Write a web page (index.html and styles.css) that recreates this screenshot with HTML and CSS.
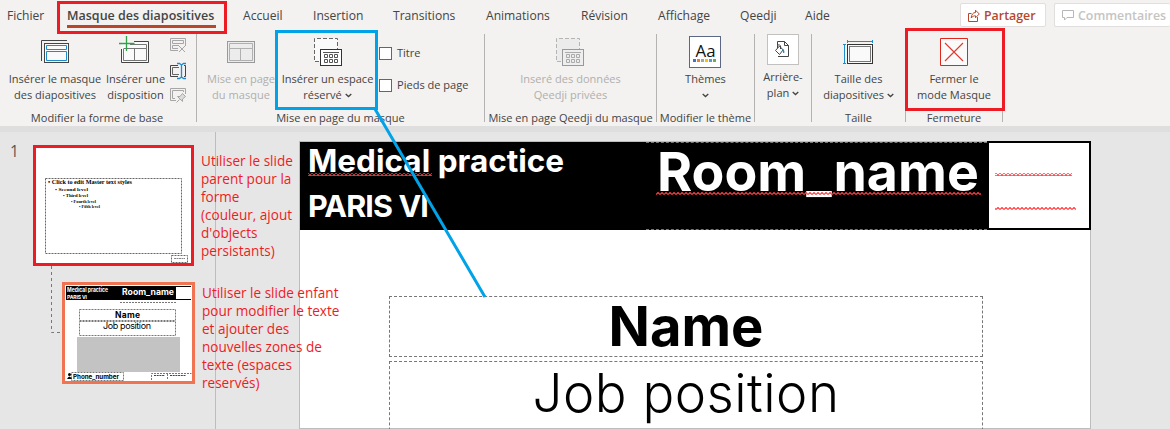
FILE: index.html
```
<!DOCTYPE html>
<html lang="fr">
<head>
<meta charset="utf-8">
<title>Masque des diapositives</title>
<link rel="stylesheet" href="styles.css">
</head>
<body>
<div class="app">
  <header class="tabbar">
    <nav class="tabs">
      <span>Fichier</span><span class="active">Masque des diapositives</span><span>Accueil</span><span>Insertion</span><span>Transitions</span><span>Animations</span><span>Révision</span><span>Affichage</span><span>Qeedji</span><span>Aide</span>
    </nav>
    <div class="actions">
      <div class="action share">
        <svg width="12" height="13" viewBox="0 0 12 13" fill="none" stroke="#b7472a"><path d="M3.500 4.500H.5v8h9V8M7.500 1.200V3.500C5 3.500 3.500 5.500 3.200 9C4.500 7.200 6 6.800 7.500 6.800V8.800L11.300 5Z"/></svg>
        <span>Partager</span>
      </div>
      <div class="action comments">
        <svg width="12" height="12" viewBox="0 0 12 12" fill="none" stroke="#b9b7b5"><path d="M.5 1.500H11.500V8.500H5L2.500 11V8.500H.5Z"/></svg>
        <span>Commentaires</span>
      </div>
    </div>
  </header>

  <section class="ribbon">
    <div class="group g-base">
      <div class="row">
        <div class="btn b-master">
          <svg width="30" height="37" viewBox="0 0 30 37" fill="none"><path d="M1.500 27V6.500H27" stroke="#444"/><rect x="4.500" y="9.500" width="24" height="19" fill="#fafafa" stroke="#444"/><path d="M6.500 11.500h20v4h-20zM6.500 17.500h20v9h-20z" stroke="#1e8bcd"/></svg>
          <span>Insérer le masque</span><span>des diapositives</span>
        </div>
        <div class="btn b-layout">
          <svg width="32" height="37" viewBox="0 0 32 37" fill="none"><rect x="3.500" y="7.500" width="27" height="21" fill="#fafafa"/><path d="M3.500 15V28.500H30.500V7.500H16" stroke="#444"/><path d="M12 10.500H28.500V14.500H12M5.500 15V26.500H28.500V14.500H5.500M16.500 14.500V26.500" stroke="#777"/><path d="M1 9.500H16.500M8.500 2V17" stroke="#33a04a" stroke-width="1.300"/></svg>
          <span>Insérer une</span><span>disposition</span>
        </div>
        <div class="tools">
          <svg width="17" height="16" viewBox="0 0 17 16" fill="none" stroke="#a6a6a6"><path d="M8 12.500H.5V.5H15.500V8M2.500 2.500h11v3h-11zM9 7.500H2.500V10.500H8"/><path d="M9 8l6 6M15 8l-6 6"/></svg>
          <svg width="17" height="18" viewBox="0 0 17 18" fill="none"><path d="M8 3.500H.5V14.500H8M14 3.500H15.500V14.500H14" stroke="#444"/><path d="M9 5.500H2.500V12.500H9" stroke="#666"/><path d="M7 1.500H9.500L11.500 3V15L9.500 16.500H7M16 1.500H13.500L11.500 3M16 16.500H13.500L11.500 15" stroke="#1e8bcd" stroke-width="1.300"/></svg>
          <svg width="17" height="16" viewBox="0 0 17 16" fill="none" stroke="#a6a6a6"><path d="M6 12.500H.5V.5H15.500V6M5 10.500H2.500V2.500H13.500V4"/><path d="M6.500 14.500L9.500 11.500M7.500 8.500L12.500 13.500V11L15.500 8.500L12.500 5.500L10 8.500Z" fill="#ddd"/></svg>
        </div>
      </div>
      <div class="caption">Modifier la forme de base</div>
    </div>

    <div class="group g-master">
      <div class="row">
        <div class="btn off b-page">
          <svg width="28" height="37" viewBox="0 0 28 37" fill="none"><rect x=".5" y="7.500" width="27" height="21" fill="#ececec" stroke="#999"/><path d="M2.500 9.500h23v5h-23zM2.500 14.500h23v12h-23zM13.500 14.500v12" stroke="#b0b0b0"/></svg>
          <span>Mise en page</span><span>du masque</span>
        </div>
        <div class="btn b-place">
          <svg width="28" height="37" viewBox="0 0 28 37" fill="none"><rect x=".5" y="4.500" width="23" height="23" fill="#fafafa"/><path d="M5 27.500H.5V4.500H23.500V15" stroke="#666" stroke-dasharray="4 2"/><rect x="6.500" y="15.500" width="21" height="16" fill="#fff" stroke="#333"/><path d="M9 18.500H25" stroke="#555"/><path d="M10.500 20.500h3v3h-3zM15.500 20.500h3v3h-3zM20.500 20.500h3v3h-3zM10.500 25.500h3v3h-3zM15.500 25.500h3v3h-3zM20.500 25.500h3v3h-3z" stroke="#555"/></svg>
          <span>Insérer un espace</span><span>réservé <svg class="chev" viewBox="0 0 7 5"><path d="M.7 1L3.500 3.600L6.300 1"/></svg></span>
        </div>
        <div class="checks">
          <label><i></i>Titre</label>
          <label><i></i>Pieds de page</label>
        </div>
      </div>
      <div class="caption">Mise en page du masque</div>
    </div>

    <div class="group g-qeedji">
      <div class="row">
        <div class="btn off">
          <svg width="28" height="37" viewBox="0 0 28 37" fill="none"><rect x=".5" y="4.500" width="23" height="23" fill="#ececec"/><path d="M5 27.500H.5V4.500H23.500V15" stroke="#b5b5b5" stroke-dasharray="4 2"/><rect x="6.500" y="15.500" width="21" height="16" fill="#eee" stroke="#999"/><path d="M9 18.500H25" stroke="#aaa"/><path d="M10.500 20.500h3v3h-3zM15.500 20.500h3v3h-3zM20.500 20.500h3v3h-3zM10.500 25.500h3v3h-3zM15.500 25.500h3v3h-3zM20.500 25.500h3v3h-3z" stroke="#aaa"/></svg>
          <span>Inseré des données</span><span>Qeedji privées</span>
        </div>
      </div>
      <div class="caption">Mise en page Qeedji du masque</div>
    </div>

    <div class="group g-theme">
      <div class="row">
        <div class="btn">
          <svg width="32" height="37" viewBox="0 0 32 37"><rect x=".5" y="2.500" width="31" height="31" fill="#fff" stroke="#5b6785"/><text class="aa" x="6.500" y="23" textLength="20" lengthAdjust="spacingAndGlyphs">Aa</text><path fill="#4472c4" d="M4 25h3v3H4z"/><path fill="#ed7d31" d="M8 25h3v3H8z"/><path fill="#a5a5a5" d="M12 25h3v3h-3z"/><path fill="#ffc000" d="M16 25h3v3h-3z"/><path fill="#5b9bd5" d="M20 25h3v3h-3z"/><path fill="#70ad47" d="M24 25h3v3h-3z"/></svg>
          <span>Thèmes</span><span><svg class="chev" viewBox="0 0 7 5"><path d="M.7 1L3.500 3.600L6.300 1"/></svg></span>
        </div>
      </div>
      <div class="caption">Modifier le thème</div>
    </div>

    <div class="group g-back">
      <div class="row">
        <div class="btn">
          <svg width="32" height="35" viewBox="0 0 32 35" fill="none"><rect x=".5" y=".5" width="31" height="30" fill="#fff" stroke="#c3c1bf"/><path d="M10.500 12V7.500H17.500L21.500 11.500V22.500H11M17.500 7.500V11.500H21.500" stroke="#444"/><path d="M8.500 16.500L12.500 12L16 16L12.500 20.500ZM10.500 14V11.500Q12.500 9.500 13.500 12V15" stroke="#444" fill="#fff"/><path d="M15 15.500Q17 15.500 16.700 19" stroke="#1e8bcd" stroke-width="1.300"/></svg>
          <span>Arrière-</span><span>plan <svg class="chev" viewBox="0 0 7 5"><path d="M.7 1L3.500 3.600L6.300 1"/></svg></span>
        </div>
      </div>
    </div>

    <div class="group g-size">
      <div class="row">
        <div class="btn">
          <svg width="30" height="37" viewBox="0 0 30 37" fill="none"><path d="M4.500 7.500H29.500M4.500 6v3M29.500 6v3M1.500 10.500V29.500M0 10.500h3M0 29.500h3" stroke="#1e8bcd"/><rect x="4.500" y="10.500" width="25" height="19" fill="#fafafa" stroke="#333"/><rect x="6.500" y="12.500" width="21" height="15" stroke="#777"/></svg>
          <span>Taille des</span><span>diapositives <svg class="chev" viewBox="0 0 7 5"><path d="M.7 1L3.500 3.600L6.300 1"/></svg></span>
        </div>
      </div>
      <div class="caption">Taille</div>
    </div>

    <div class="group g-close">
      <div class="row">
        <div class="btn">
          <svg width="28" height="37" viewBox="0 0 28 37"><path d="M.5 4.500h27v27H.5z" fill="#fafafa" stroke="#e0261c"/><path d="M5 9L23 27M23 9L5 27" stroke="#dc3a2e" stroke-width="1.100"/></svg>
          <span>Fermer le</span><span>mode Masque</span>
        </div>
      </div>
      <div class="caption">Fermeture</div>
    </div>
  </section>

  <main class="workspace">
    <aside class="panel">
      <span class="num">1</span>
      <div class="thumbs">
        <svg class="thumb parent" width="155" height="115" viewBox="0 0 155 115">
          <rect width="155" height="115" fill="#fff"/>
          <g fill="none" stroke="#666" stroke-dasharray="2 1"><path d="M9.500 30.500h136v75h-136zM135.500 107.500h16v7h-16z"/></g>
          <g class="serif"><text x="12" y="36" font-size="6" textLength="84" lengthAdjust="spacingAndGlyphs">• Click to edit Master text styles</text><text x="19" y="43" font-size="5" textLength="33" lengthAdjust="spacingAndGlyphs">• Second level</text><text x="27" y="49" font-size="4.500" textLength="25" lengthAdjust="spacingAndGlyphs">• Third level</text><text x="35" y="55" font-size="4.500" textLength="25" lengthAdjust="spacingAndGlyphs">• Fourth level</text><text x="43" y="60" font-size="4" textLength="21" lengthAdjust="spacingAndGlyphs">• Fifth level</text></g>
          <path d="M138 110.500h11" stroke="#888" stroke-dasharray="2 .5"/>
        </svg>
        <div class="child-row">
          <svg class="link" width="12" height="68" viewBox="0 0 12 68"><path d="M1.500 0V66.500H11" fill="none" stroke="#777" stroke-dasharray="3 3"/></svg>
          <svg class="thumb child" width="127" height="96" viewBox="0 0 127 96">
            <rect width="127" height="96" fill="#fff"/><path d="M1 1h125v14H1z"/><path d="M111 2h15v12h-15z" fill="#fff"/>
            <g class="geo"><g fill="#fff"><text x="2" y="6.500" font-size="5.500" textLength="41" lengthAdjust="spacingAndGlyphs">Medical practice</text><text x="2" y="14" font-size="5" textLength="20">PARIS VI</text><text x="57" y="10" font-size="9" textLength="52" lengthAdjust="spacingAndGlyphs">Room_name</text></g>
            <text x="50" y="33" font-size="8.500" textLength="25">Name</text><text class="light" x="38" y="43.500" font-size="9" textLength="48">Job position</text><text x="8" y="94" font-size="6" textLength="46" lengthAdjust="spacingAndGlyphs">Phone_number</text></g>
            <path d="M12 52h103v35H12z" fill="#c3c3c3"/>
            <g fill="none" stroke="#777" stroke-dasharray="2 1"><path d="M14.500 24.500h96v11h-96zM14.500 36.500h96v14h-96zM55 17.500h57M6.500 87.500h52v8h-52zM86.500 95V88.500h40M102.500 89v6"/></g>
            <path d="M89 90.500h11M105 90.500h16" stroke="#444" stroke-dasharray="2 .7"/>
            <circle cx="4.500" cy="89.500" r="1.500"/><path d="M2 94q2.500-5 5 0z"/>
          </svg>
        </div>
      </div>
    </aside>
    <section class="editor">
      <div class="slide">
        <div class="banner">
          <div class="practice"><p class="medical">Medical practice</p><p class="paris">PARIS VI</p></div>
          <div class="room">Room_name</div>
          <div class="box"></div>
        </div>
        <div class="holder name">Name</div>
        <div class="holder job">Job position</div>
      </div>
    </section>
  </main>

  <svg class="squiggles" width="1170" height="429" viewBox="0 0 1170 429">
    <defs><pattern id="zig" width="4" height="3" patternUnits="userSpaceOnUse"><path d="M0 2.500L2 .5L4 2.500" fill="none" stroke="#ff3c40" stroke-width="1.200"/></pattern></defs>
    <path d="M308 173h124v3H308zM656 192h325v3H656z" fill="url(#zig)"/>
    <path d="M995 173h77v3h-77zM995 207h81v3h-81z" fill="url(#zig)"/>
  </svg>
  <p class="note note-parent">Utiliser le slide<br>parent pour la<br>forme<br>(couleur, ajout<br>d'objects<br>persistants)</p>
  <p class="note note-child">Utiliser le slide enfant<br>pour modifier le texte<br>et ajouter des<br>nouvelles zones de<br>texte (espaces<br>reservés)</p>
  <svg class="marks" width="1170" height="429" viewBox="0 0 1170 429" fill="none" stroke-width="3">
    <path d="M58.500 2.500h167v30h-167zM906.500 29.500h97v80h-97z" stroke="#ed1c24"/>
    <path d="M276.500 31.500h100v77h-100zM375 109L485 297" stroke="#00a2e8"/>
  </svg>
</div>
</body>
</html>
```
FILE: styles.css
```
* { box-sizing: border-box; }
body { margin: 0; overflow: hidden; font-family: "Open Sans", sans-serif; color: #444; }
p { margin: 0; }
.app { position: relative; width: 1170px; height: 429px; overflow: hidden; background: #e6e6e6; }

/* Tab bar */
.tabbar { display: flex; justify-content: space-between; height: 34px; background: #f3f2f1; }
.tabs { display: grid; grid-template-columns: 60px 176px 70px 80px 93px 95px 77px 82px 65px 40px; padding-left: 7px; font-size: 12.1px; line-height: 31px; height: 31px; white-space: nowrap; }
.tabs .active { width: 149px; height: 28px; font-size: 12.5px; font-weight: 600; border-bottom: 3px solid #b7472a; }
.actions { display: flex; gap: 8px; padding-top: 3px; }
.action { display: flex; align-items: center; height: 24px; background: #fff; border: 1px solid #e1dfdd; border-radius: 2px; font-size: 12.4px; font-weight: 600; white-space: nowrap; }
.share { width: 86px; padding-left: 7px; gap: 4px; color: #b7472a; }
.comments { width: 116px; padding-left: 7px; gap: 4px; color: #c6c4c2; border-right: 0; }

/* Ribbon */
.ribbon { display: flex; height: 92px; background: #f3f2f1; font-size: 11.05px; line-height: 16px; white-space: nowrap; }
.group { height: 88px; border-right: 1px solid #b5b3b1; display: flex; flex-direction: column; }
.row { display: flex; flex: none; justify-content: center; height: 76px; }
.caption { flex: none; height: 16px; text-align: center; line-height: 16px; }
.btn { display: flex; flex-direction: column; align-items: center; }
.btn > svg { flex: none; display: block; }
.off { color: #b1afad; }
.chev { width: 7px; height: 5px; vertical-align: 1px; fill: none; stroke: #444; stroke-width: 1.300; }
.aa { font: 17px "Open Sans", sans-serif; fill: #111; }
.g-base { width: 197px; }
.g-base .row { justify-content: flex-start; padding-left: 8px; }
.g-base .caption { padding-right: 2px; }
.b-master { width: 94px; }
.b-layout { width: 67px; }
.b-layout > svg { margin-right: 3px; }
.tools { display: flex; flex-direction: column; gap: 8px; padding-top: 4px; margin-left: 1px; }
.g-master { width: 288px; }
.g-master .row { justify-content: flex-start; padding-left: 9px; }
.b-page { width: 70px; }
.b-place { width: 103px; background: #f3f2f1; }
.checks { display: flex; flex-direction: column; gap: 16px; padding-top: 11px; }
.checks label { display: flex; align-items: center; gap: 5px; height: 16px; }
.checks i { width: 13px; height: 13px; border: 1px solid #666; background: #fff; }
.g-qeedji { width: 172px; }
.g-theme { width: 98px; }
.g-back { width: 57px; }
.g-size { width: 94px; }
.g-close { width: 97px; }
.g-qeedji .caption { font-size: 11px; }

/* Workspace */
.workspace { display: flex; height: 303px; border-top: 6px solid #dedede; }
.panel { display: flex; width: 216px; padding-left: 10px; border-right: 1px solid #bdbdbd; }
.num { width: 23px; padding-top: 9px; font-size: 15.500px; line-height: 20px; color: #555; }
.thumbs { padding-top: 13px; }
.thumb { display: block; box-sizing: content-box; }
.parent { border: 3px solid #ed1c24; }
.child { border: 3px solid #f07352; margin-top: 16px; }
.child-row { display: flex; padding-left: 17px; }
.serif { font-family: "Liberation Serif", serif; font-weight: bold; fill: #000; }
.geo { font-family: Inter, sans-serif; font-weight: 700; }
.geo .light { font-weight: 400; }
.editor { flex: 1; padding: 9px 0 0 83px; }
.slide { width: 792px; height: 288px; background: #fff; border: 1px solid #bdbdbd; color: #000; font-family: Inter, sans-serif; }
.banner { display: flex; height: 88px; background: #000; color: #fff; font-weight: 700; white-space: nowrap; }
.practice { width: 346px; padding: 0 0 0 8px; }
.medical { font-size: 31.500px; line-height: 38px; }
.paris { font-size: 30.500px; line-height: 52px; letter-spacing: -.9px; }
.room { width: 341px; height: 88px; padding-left: 11px; border: dashed #777; border-width: 1px 0; font-size: 53.600px; line-height: 58px; }
.box { width: 104px; margin: -1px -1px 0 0; height: 89px; border: 2px solid #000; background: #fff; flex: none; }
.holder { width: 594px; margin-left: 89px; border: 1px dashed #777; text-align: center; white-space: nowrap; }
.name { height: 61px; margin-top: 66px; font-size: 54.300px; font-weight: 700; line-height: 58px; }
.job { height: 90px; margin-top: 4px; font-size: 52.800px; font-weight: 300; line-height: 62px; letter-spacing: .5px; }

/* Annotations drawn over the window */
.squiggles, .marks { position: absolute; left: 0; top: 0; }
.note { position: absolute; color: #ed1c24; font-size: 13.550px; line-height: 18px; white-space: nowrap; }
.note-parent { left: 201px; top: 152px; }
.note-child { left: 202px; top: 284px; }
```
